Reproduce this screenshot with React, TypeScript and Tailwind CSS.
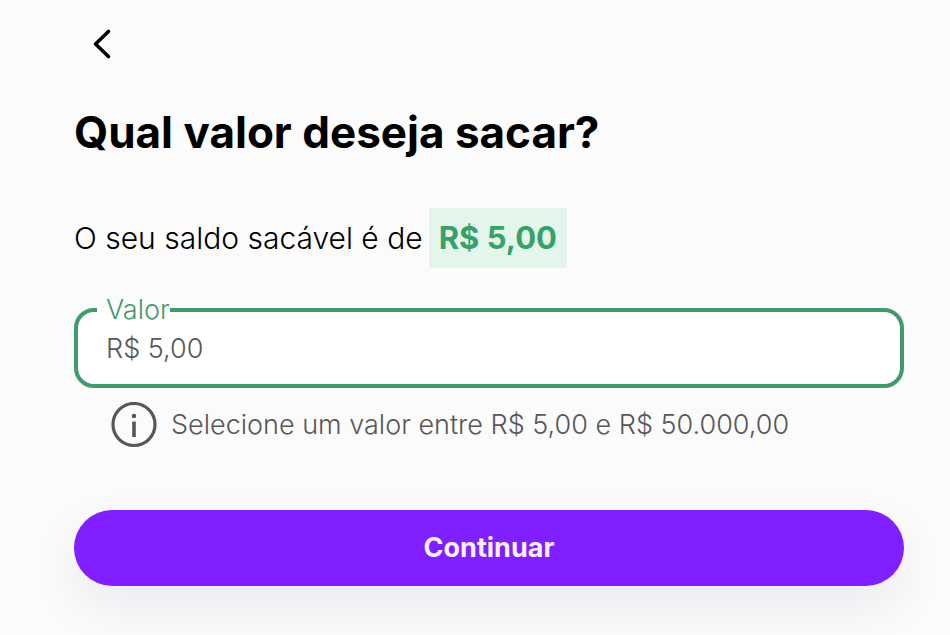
import { useState } from 'react';

const MIN_VALUE = 'R$ 5,00';
const MAX_VALUE = 'R$ 50.000,00';

function BackIcon() {
  return (
    <svg width="20" height="32" viewBox="0 0 20 32" fill="none" stroke="currentColor" strokeWidth="3.6" strokeLinecap="round" strokeLinejoin="round" aria-hidden="true">
      <path d="M16.5 3.5 3.5 16l13 12.5" />
    </svg>
  );
}

function InfoIcon() {
  return (
    <svg className="shrink-0" width="46" height="46" viewBox="0 0 46 46" fill="none" aria-hidden="true">
      <circle cx="23" cy="22.5" r="21" stroke="currentColor" strokeWidth="3.2" />
      <circle cx="23" cy="14" r="2.3" fill="currentColor" />
      <path d="M23 19.5v15.5" stroke="currentColor" strokeWidth="3.6" />
    </svg>
  );
}

export default function App() {
  const [amount, setAmount] = useState(MIN_VALUE);

  return (
    <main className="min-h-screen bg-[#fbfbfb] pt-7 pr-[46px] pb-12 pl-[74px] font-['Inter',sans-serif] text-black">
      <button type="button" aria-label="Voltar" className="block px-[18px]">
        <BackIcon />
      </button>

      <h1 className="mt-11 text-[44px] leading-[56px] font-bold">Qual valor deseja sacar?</h1>

      <p className="mt-12 flex items-center gap-1.5 text-[30px] leading-[60px] font-light">
        <span>O seu saldo sacável é de</span>
        <strong className="bg-[#e4f6ec] px-[10px] text-[31px] font-bold text-[#36a269]">{MIN_VALUE}</strong>
      </p>

      {/* Amount field, the legend interrupts the outline */}
      <fieldset className="mt-[26px] rounded-[20px] border-4 border-[#3f9b6b] bg-white px-[19px] pb-[14px]">
        <legend className="pl-[9px] text-[27px] leading-[32px] font-light text-[#3f9b6b]">
          <label htmlFor="amount">Valor</label>
        </legend>
        <input
          id="amount"
          inputMode="decimal"
          value={amount}
          onChange={e => setAmount(e.target.value)}
          className="block h-[44px] w-full bg-transparent px-[9px] text-[27px] font-light text-[#575757] outline-none"
        />
      </fieldset>

      <div className="mt-[14px] flex items-center gap-[14px] pl-[37px] text-[27px] leading-[32px] font-light text-[#575757]">
        <InfoIcon />
        <p>Selecione um valor entre {MIN_VALUE} e {MAX_VALUE}</p>
      </div>

      <button
        type="button"
        className="mt-[62px] h-[76px] w-full rounded-full bg-[#801fff] text-[27px] leading-[32px] font-bold text-[#f8efff] shadow-[0_20px_48px_rgba(30,20,80,0.07)]"
      >
        Continuar
      </button>
    </main>
  );
}
